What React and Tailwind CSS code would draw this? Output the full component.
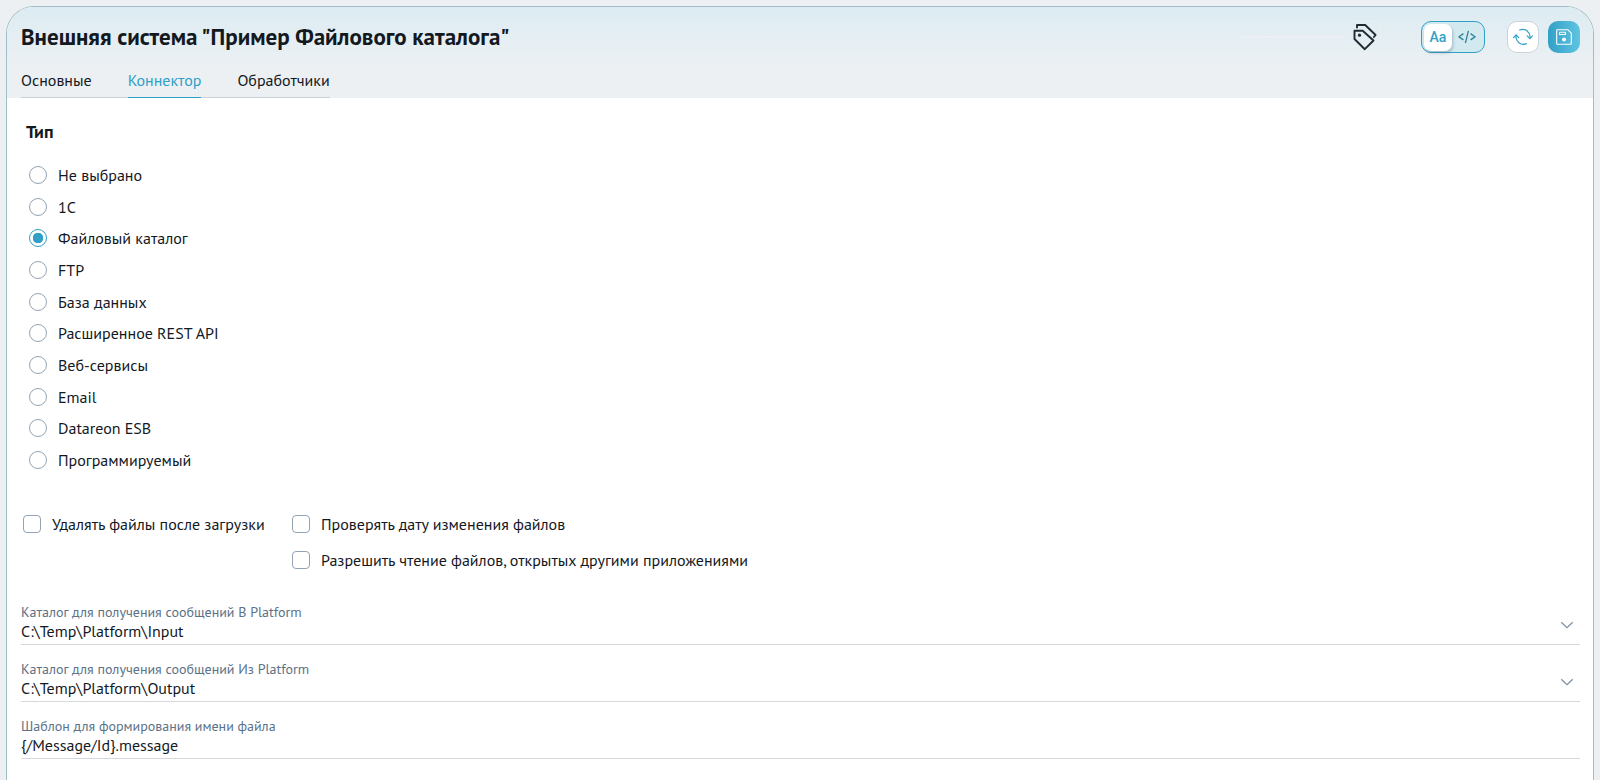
import { useState } from "react";

const tabs = ["Основные", "Коннектор", "Обработчики"];

const connectorTypes = [
  "Не выбрано",
  "1С",
  "Файловый каталог",
  "FTP",
  "База данных",
  "Расширенное REST API",
  "Веб-сервисы",
  "Email",
  "Datareon ESB",
  "Программируемый",
];

function TagsIcon() {
  return (
    <svg width="24" height="28" viewBox="0 0 24 28" fill="none" stroke="#1f2a33" strokeWidth="1.9" strokeLinejoin="round" strokeLinecap="round" aria-hidden="true">
      <path d="M1.5 7.8h8.2l10.8 9.7-8.7 8.7L1.5 16z" />
      <circle cx="6.5" cy="12.2" r="1.6" fill="#1f2a33" stroke="none" />
      <path d="M4 4.6V2h8.2L22.6 12l-1.7 2" />
    </svg>
  );
}

function RefreshIcon() {
  return (
    <svg width="20" height="20" viewBox="0 0 20 20" fill="none" stroke="#31a0c6" strokeWidth="1.2" strokeLinecap="round" strokeLinejoin="round" aria-hidden="true">
      <path d="M6.6 3A7.4 7.4 0 0 1 16.9 11" />
      <path d="M14.2 8.9l2.7 2.7L19.4 8.9" />
      <path d="M13.4 16.6A7.4 7.4 0 0 1 3.1 8.6" />
      <path d="M.6 10.7L3.1 8 5.8 10.7" />
    </svg>
  );
}

function SaveIcon() {
  return (
    <svg width="18" height="18" viewBox="0 0 18 18" fill="none" stroke="#ffffff" strokeWidth="1.1" strokeLinejoin="round" aria-hidden="true">
      <path d="M2.3 1.7h10.4l3.6 3.4v10.5a.7.7 0 0 1-.7.7H2.4a.7.7 0 0 1-.7-.7V2.3a.6.6 0 0 1 .6-.6z" />
      <path d="M4.5 4.3h6v2.2h-6z" />
      <circle cx="9" cy="11.5" r="2" fill="#ffffff" stroke="none" />
    </svg>
  );
}

function ChevronDown() {
  return (
    <svg width="14" height="8" viewBox="0 0 14 8" fill="none" stroke="#7e8fa0" strokeWidth="1.2" aria-hidden="true">
      <path d="M1.3 1.2L7 6.6l5.7-5.4" />
    </svg>
  );
}

function TypeOption({ label, checked, onChange }) {
  return (
    <label className="flex w-fit items-center gap-[11px]">
      <input
        type="radio"
        name="connector-type"
        checked={checked}
        onChange={onChange}
        className="size-[18px] shrink-0 appearance-none rounded-full border border-[#94a3b3] bg-white checked:border-[#31a0c6] checked:bg-[radial-gradient(circle,#31a0c6_5px,transparent_5.5px)]"
      />
      <span>{label}</span>
    </label>
  );
}

function CheckOption({ label }) {
  return (
    <label className="flex w-fit items-center gap-[11px]">
      <input type="checkbox" className="size-[18px] shrink-0 appearance-none rounded-[4px] border border-[#94a3b3] bg-white checked:bg-[#31a0c6]" />
      <span>{label}</span>
    </label>
  );
}

function Field({ id, label, value, expandable }) {
  return (
    <div className="flex items-end border-b border-[#d6d9dc] pb-[3px]">
      <div className="grow">
        <label htmlFor={id} className="block text-[14px] leading-[18px] text-[#5c7287]">{label}</label>
        <input id={id} type="text" defaultValue={value} className="block h-5 w-full bg-transparent p-0 leading-5 outline-none" />
      </div>
      {expandable && (
        <button type="button" aria-label="Открыть список" className="mr-[6px] flex h-8 items-center">
          <ChevronDown />
        </button>
      )}
    </div>
  );
}

export default function App() {
  const [tab, setTab] = useState("Коннектор");
  const [type, setType] = useState("Файловый каталог");

  return (
    <div className="flex min-h-screen flex-col bg-[#ecf0f3] px-[6px] pt-[6px] font-['PT_Sans','Lato',sans-serif] text-[16px] leading-5 text-[#13191f]">
      <div className="flex grow flex-col overflow-hidden rounded-t-[28px] border border-b-0 border-[#a0bdc8] bg-white">
        <header className="bg-[#ecf0f3] bg-[linear-gradient(to_bottom,#dcecf2,#ecf0f3_58px)] pt-[14px] pr-[13px] pl-[14px]">
          <div className="flex items-center">
            <h1 className="grow text-[23px] leading-8 font-bold">Внешняя система "Пример Файлового каталога"</h1>
            <span className="h-[2px] w-[105px] bg-[#ecf0f3]" />
            <button type="button" aria-label="Теги" className="ml-[5px] flex size-8 items-center justify-center rounded-[4px] border border-[#e6eff3]">
              <TagsIcon />
            </button>
            <div className="ml-10 flex h-8 w-16 items-center rounded-[10px] border border-[#31a0c6] bg-[#d3e9f0] px-[2px] font-['Roboto',sans-serif] text-[14px]">
              <button type="button" className="h-[27px] w-7 rounded-[7px] bg-white font-medium text-[#31a0c6] shadow-[1px_2px_3px_rgba(60,100,120,0.35)]">Aa</button>
              <button type="button" aria-label="Код" className="flex h-7 grow items-center justify-center text-[#2f8199]">
                <svg width="18" height="14" viewBox="0 0 18 14" fill="none" stroke="currentColor" strokeWidth="1.3" aria-hidden="true">
                  <path d="M5.4 3.6L1 6.8l4.4 3.1M12.6 3.6L17 6.8l-4.4 3.1M10.4.8L7.4 13" />
                </svg>
              </button>
            </div>
            <button type="button" aria-label="Обновить" className="ml-[22px] flex size-8 items-center justify-center rounded-[10px] border border-[#c9d3da] bg-white">
              <RefreshIcon />
            </button>
            <button type="button" aria-label="Сохранить" className="ml-[9px] flex size-8 items-center justify-center rounded-[10px] bg-linear-to-r from-[#31a0c6] to-[#5fc4e2]">
              <SaveIcon />
            </button>
          </div>
          <nav className="mt-[11px] flex w-fit">
            {tabs.map((name, i) => (
              <div key={name} className="flex">
                {i > 0 && <span className="w-9 border-b border-[#c6d0d6]" />}
                <button
                  type="button"
                  onClick={() => setTab(name)}
                  className={name === tab ? "h-[34px] border-b border-[#31a0c6] pb-[2px] text-[#31a0c6]" : "h-[34px] border-b border-[#c6d0d6] pb-[2px]"}
                >
                  {name}
                </button>
              </div>
            ))}
          </nav>
        </header>

        <main className="pt-[22px] pr-[13px] pb-5 pl-[14px]">
          <fieldset>
            <legend className="px-[5px] text-[18px] leading-6 font-bold">Тип</legend>
            <div className="mt-[15px] grid h-[317px] auto-rows-fr items-center pl-2">
              {connectorTypes.map((name) => (
                <TypeOption key={name} label={name} checked={name === type} onChange={() => setType(name)} />
              ))}
            </div>
          </fieldset>

          <div className="mt-[38px] grid grid-cols-[269px_auto] gap-y-4 pl-[2px]">
            <CheckOption label="Удалять файлы после загрузки" />
            <CheckOption label="Проверять дату изменения файлов" />
            <div className="col-start-2">
              <CheckOption label="Разрешить чтение файлов, открытых другими приложениями" />
            </div>
          </div>

          <div className="mt-[33px] flex flex-col gap-[15px]">
            <Field id="input-dir" label="Каталог для получения сообщений В Platform" value="C:\Temp\Platform\Input" expandable />
            <Field id="output-dir" label="Каталог для получения сообщений Из Platform" value="C:\Temp\Platform\Output" expandable />
            <Field id="name-template" label="Шаблон для формирования имени файла" value="{/Message/Id}.message" />
          </div>
        </main>
      </div>
    </div>
  );
}
